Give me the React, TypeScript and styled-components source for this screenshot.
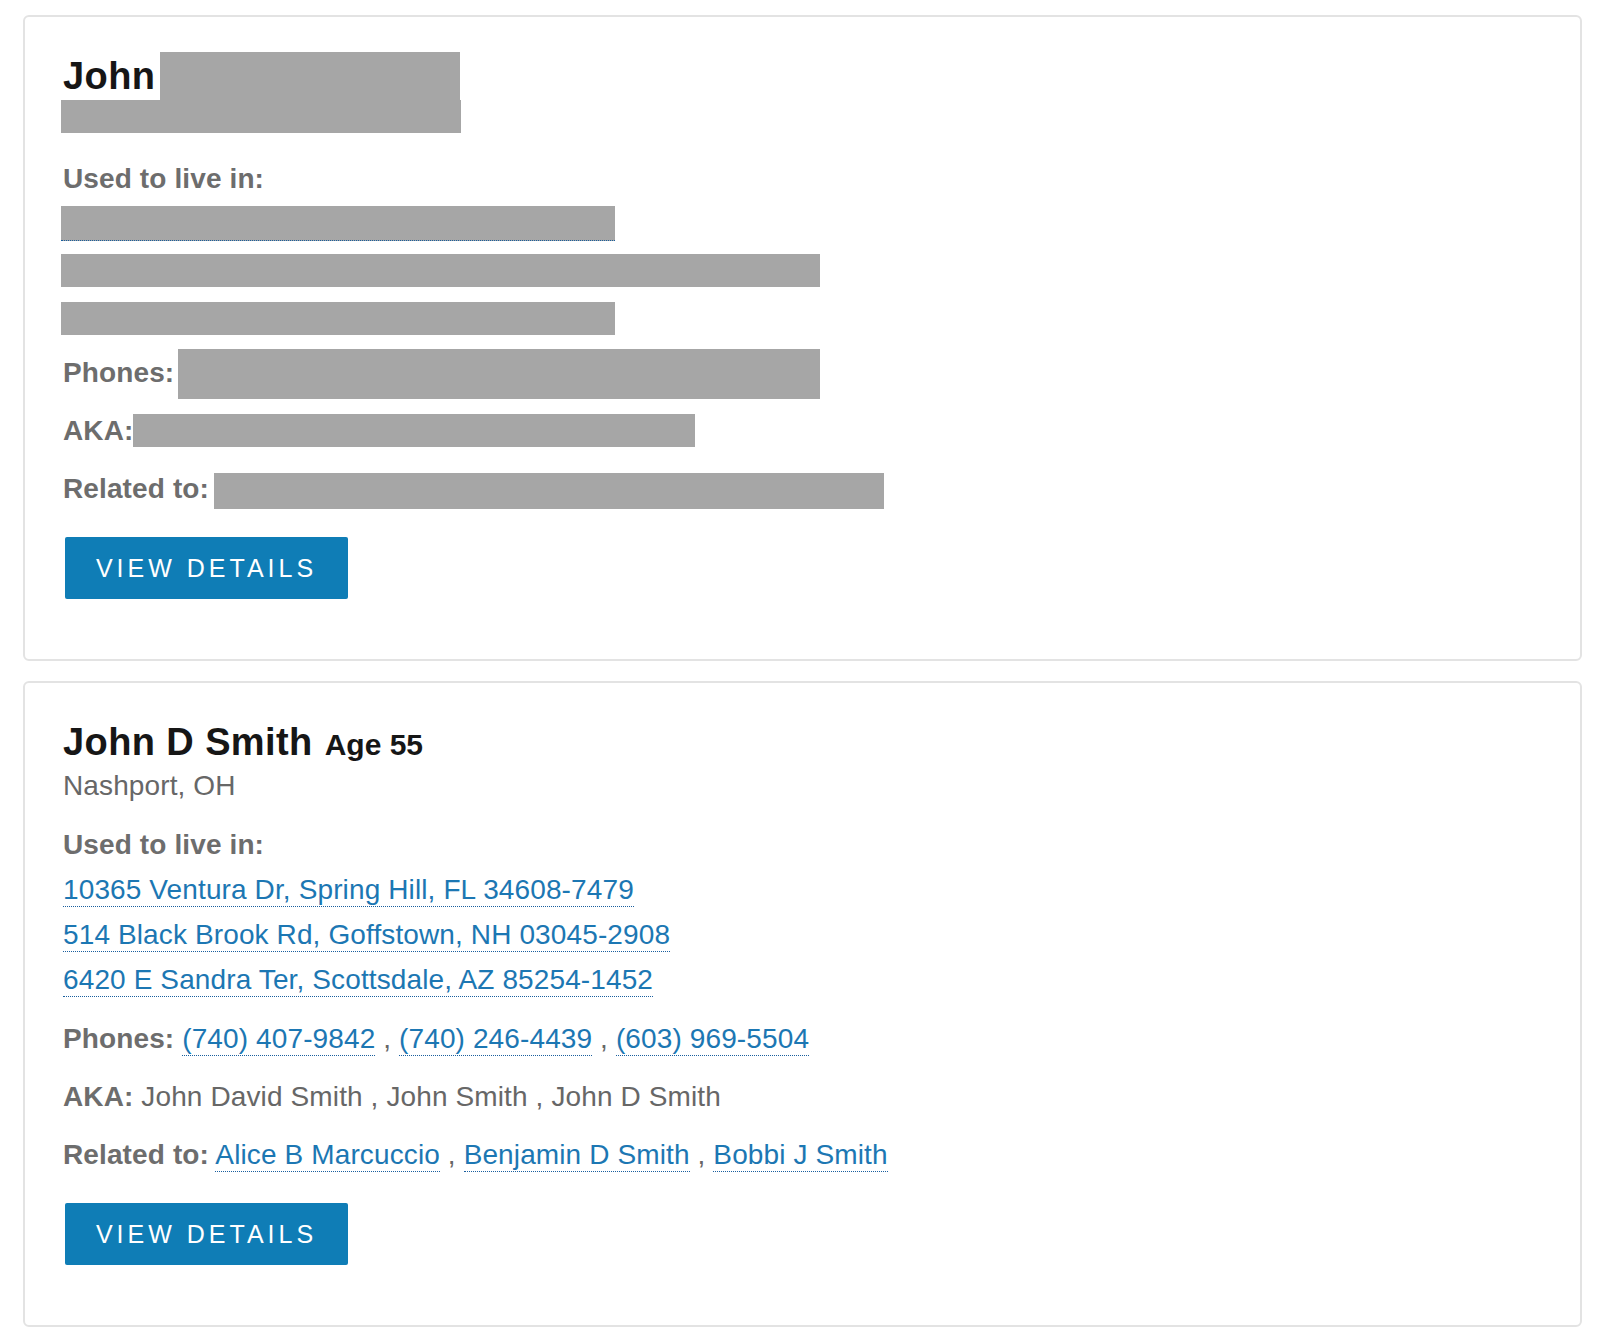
import React from "react";
import styled, { createGlobalStyle, css } from "styled-components";

const Global = createGlobalStyle`
  html, body { margin: 0; padding: 0; background: #ffffff; }
  body { font-family: "Liberation Sans", Arial, sans-serif; }
`;

const Page = styled.div`
  padding: 15px 18px 8px 23px;
  display: flex;
  flex-direction: column;
  gap: 20px;
`;

const Card = styled.section`
  border: 2px solid #e3e3e3;
  border-radius: 6px;
  padding: 36px 38px 60px 38px;
  display: flex;
  flex-direction: column;
  align-items: flex-start;
`;

const Name = styled.h2`
  margin: 0 0 -2px 0;
  font-size: 38px;
  line-height: 46px;
  font-weight: 700;
  letter-spacing: 0.4px;
  color: #161616;
  white-space: nowrap;
`;

const Age = styled.span`
  font-size: 30px;
  line-height: 0;
  letter-spacing: 0;
  margin-left: 1px;
`;

const Location = styled.div`
  font-size: 28px;
  line-height: 45px;
  letter-spacing: 0.12px;
  color: #676767;
  white-space: nowrap;
`;

const SectionLabel = styled.div`
  margin-top: 14px;
  font-size: 28px;
  line-height: 45px;
  letter-spacing: 0.12px;
  font-weight: 700;
  color: #6d6d6d;
`;

const AddressList = styled.div`
  display: flex;
  flex-direction: column;
  align-items: flex-start;
`;

const AddressLine = styled.div`
  font-size: 28px;
  line-height: 45px;
  letter-spacing: 0.12px;
  white-space: nowrap;
`;

const Link = styled.a`
  color: #1c77b3;
  text-decoration: none;
  border-bottom: 1px dotted #1a5f9e;
  padding-bottom: 1px;
  cursor: pointer;
`;

const Field = styled.div<{ $gap: number }>`
  margin-top: ${(p) => p.$gap}px;
  font-size: 28px;
  line-height: 45px;
  letter-spacing: 0.12px;
  color: #676767;
  white-space: nowrap;
`;

const Label = styled.b`
  font-weight: 700;
  color: #6d6d6d;
`;

const Redact = styled.span<{ $w: number; $h: number; $dx?: number; $dy?: number; $dotted?: boolean }>`
  display: inline-block;
  vertical-align: top;
  background: #a6a6a6;
  width: ${(p) => p.$w}px;
  height: ${(p) => p.$h}px;
  margin: ${(p) => p.$dy ?? 0}px 0 ${(p) => -((p.$dy ?? 0) + p.$h)}px ${(p) => p.$dx ?? 0}px;
  ${(p) =>
    p.$dotted &&
    css`
      border-bottom: 1px dotted #1a5f9e;
    `}
`;

const Button = styled.button`
  margin: 26px 0 0 2px;
  width: 283px;
  height: 62px;
  border: none;
  border-radius: 2px;
  background: #0f7db6;
  color: #ffffff;
  font-family: "Liberation Sans", Arial, sans-serif;
  font-size: 25px;
  letter-spacing: 4px;
  text-transform: uppercase;
  cursor: pointer;
`;

const Sep = () => <> , </>;

function LinkList({ items }: { items: string[] }) {
  return (
    <>
      {items.map((it, i) => (
        <React.Fragment key={it}>
          {i > 0 && <Sep />}
          <Link>{it}</Link>
        </React.Fragment>
      ))}
    </>
  );
}

function RedactedCard() {
  return (
    <Card>
      <Name>
        John
        <Redact $w={300} $h={48} $dx={5} $dy={-1} />
      </Name>
      <Location>
        <Redact $w={400} $h={33} $dx={-2} $dy={3} />
      </Location>
      <SectionLabel>Used to live in:</SectionLabel>
      <AddressList>
        <AddressLine>
          <Redact $w={554} $h={34} $dx={-2} $dy={5} $dotted />
        </AddressLine>
        <AddressLine>
          <Redact $w={759} $h={33} $dx={-2} $dy={8} />
        </AddressLine>
        <AddressLine>
          <Redact $w={554} $h={33} $dx={-2} $dy={11} />
        </AddressLine>
      </AddressList>
      <Field $gap={14}>
        <Label>Phones:</Label>
        <Redact $w={642} $h={50} $dx={4} $dy={-1} />
      </Field>
      <Field $gap={13}>
        <Label>AKA:</Label>
        <Redact $w={562} $h={33} $dx={0} $dy={6} />
      </Field>
      <Field $gap={13}>
        <Label>Related to:</Label>
        <Redact $w={670} $h={36} $dx={5} $dy={7} />
      </Field>
      <Button>View Details</Button>
    </Card>
  );
}

function PersonCard() {
  return (
    <Card>
      <Name>
        John D Smith <Age>Age 55</Age>
      </Name>
      <Location>Nashport, OH</Location>
      <SectionLabel>Used to live in:</SectionLabel>
      <AddressList>
        <AddressLine>
          <Link>10365 Ventura Dr, Spring Hill, FL 34608-7479</Link>
        </AddressLine>
        <AddressLine>
          <Link>514 Black Brook Rd, Goffstown, NH 03045-2908</Link>
        </AddressLine>
        <AddressLine>
          <Link>6420 E Sandra Ter, Scottsdale, AZ 85254-1452</Link>
        </AddressLine>
      </AddressList>
      <Field $gap={14}>
        <Label>Phones:</Label> <LinkList items={["(740) 407-9842", "(740) 246-4439", "(603) 969-5504"]} />
      </Field>
      <Field $gap={13}>
        <Label>AKA:</Label> John David Smith , John Smith , John D Smith
      </Field>
      <Field $gap={13}>
        <Label>Related to:</Label> <LinkList items={["Alice B Marcuccio", "Benjamin D Smith", "Bobbi J Smith"]} />
      </Field>
      <Button>View Details</Button>
    </Card>
  );
}

export default function App() {
  return (
    <>
      <Global />
      <Page>
        <RedactedCard />
        <PersonCard />
      </Page>
    </>
  );
}
